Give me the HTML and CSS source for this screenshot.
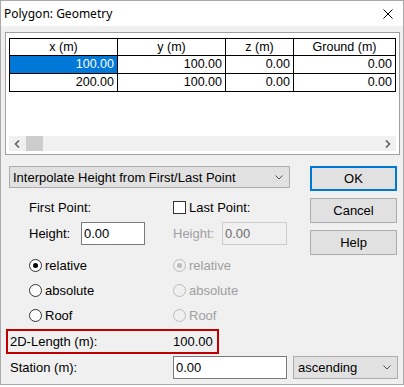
FILE: index.html
```html
<!DOCTYPE html>
<html lang="en">
<head>
    <meta charset="UTF-8">
    <title>Polygon: Geometry</title>
    <link rel="stylesheet" href="styles.css">
</head>
<body>
    <div class="window">
        <div class="titlebar">
            <span class="title">Polygon: Geometry</span>
            <svg class="close" width="10" height="10" viewBox="0 0 10 10">
                <path d="M0.5 0.5 L9.5 9.5 M9.5 0.5 L0.5 9.5" stroke="#000" stroke-width="1" fill="none"/>
            </svg>
        </div>
        <div class="content">
            <div class="grid-frame">
                <div class="grid-body">
                    <table class="points">
                        <colgroup>
                            <col style="width:108px">
                            <col style="width:108px">
                            <col style="width:68px">
                            <col style="width:102px">
                        </colgroup>
                        <thead>
                            <tr><th>x (m)</th><th>y (m)</th><th>z (m)</th><th>Ground (m)</th></tr>
                        </thead>
                        <tbody>
                            <tr><td class="selected">100.00</td><td>100.00</td><td>0.00</td><td>0.00</td></tr>
                            <tr><td>200.00</td><td>100.00</td><td>0.00</td><td>0.00</td></tr>
                        </tbody>
                    </table>
                </div>
                <div class="hscroll">
                    <svg class="arrow" width="6" height="8" viewBox="0 0 6 8"><path d="M5 0.5 L1.5 4 L5 7.5" stroke="#606060" stroke-width="1.6" fill="none"/></svg>
                    <span class="thumb"></span>
                    <svg class="arrow right" width="6" height="8" viewBox="0 0 6 8"><path d="M1 0.5 L4.5 4 L1 7.5" stroke="#606060" stroke-width="1.6" fill="none"/></svg>
                </div>
            </div>

            <div class="options">
                <div class="opts-left">
                    <div class="combo mode">
                        <span>Interpolate Height from First/Last Point</span>
                        <svg class="chevron" width="8" height="5" viewBox="0 0 8 5"><path d="M0.5 0.5 L4 4 L7.5 0.5" stroke="#505050" stroke-width="1" fill="none"/></svg>
                    </div>
                    <div class="points-grid">
                        <div class="cell row-a">First Point:</div>
                        <div class="cell row-a"><span class="checkbox"></span><span class="check-label">Last Point:</span></div>

                        <div class="cell row-b"><span class="field-label">Height:</span><span class="input">0.00</span></div>
                        <div class="cell row-b disabled"><span class="field-label short">Height:</span><span class="input off">0.00</span></div>

                        <div class="cell radio-row first"><span class="radio on"></span>relative</div>
                        <div class="cell radio-row first disabled"><span class="radio on off"></span>relative</div>
                        <div class="cell radio-row"><span class="radio"></span>absolute</div>
                        <div class="cell radio-row disabled"><span class="radio off"></span>absolute</div>
                        <div class="cell radio-row"><span class="radio"></span>Roof</div>
                        <div class="cell radio-row disabled"><span class="radio off"></span>Roof</div>
                    </div>
                </div>
                <div class="buttons">
                    <button class="btn default">OK</button>
                    <button class="btn">Cancel</button>
                    <button class="btn">Help</button>
                </div>
            </div>

            <div class="length-box">
                <span class="length-label">2D-Length (m):</span>
                <span>100.00</span>
            </div>

            <div class="station-row">
                <span class="station-label">Station (m):</span>
                <span class="input station">0.00</span>
                <div class="combo order">
                    <span>ascending</span>
                    <svg class="chevron" width="8" height="5" viewBox="0 0 8 5"><path d="M0.5 0.5 L4 4 L7.5 0.5" stroke="#505050" stroke-width="1" fill="none"/></svg>
                </div>
            </div>
        </div>
    </div>
</body>
</html>
```

FILE: styles.css
```css
body {
    margin: 0;
    background-color: #ffffff;
    font-family: 'Liberation Sans', Arial, sans-serif;
    font-size: 13px;
    color: #000;
}
.window {
    width: 404px;
    height: 385px;
    box-sizing: border-box;
    border: 1px solid #a9a9a9;
    background-color: #f0f0f0;
}
.titlebar {
    height: 25px;
    background-color: #ffffff;
    display: flex;
    align-items: center;
    justify-content: space-between;
    padding: 0 10px 0 3px;
}
.title {
    font-family: 'Noto Sans', sans-serif;
    font-size: 12px;
}
.close {
    display: block;
}
.grid-frame {
    margin: 6px 0 0 4px;
    width: 395px;
    height: 123px;
    box-sizing: border-box;
    border: 1px solid #a0a0a0;
    background-color: #ffffff;
    padding: 5px 3px 3px 3px;
}
.grid-body {
    height: 98px;
}
.points {
    border-collapse: collapse;
    table-layout: fixed;
    width: 387px;
    font-size: 12.5px;
}
.points th,
.points td {
    border: 1px solid #000;
    padding: 0 3px;
    height: 16px;
    line-height: 16px;
    font-weight: normal;
    white-space: nowrap;
}
.points th {
    text-align: center;
}
.points td {
    text-align: right;
    height: 17px;
    line-height: 17px;
}
.points td.selected {
    background-color: #0078d7;
    color: #ffffff;
}
.hscroll {
    height: 15px;
    background-color: #f0f0f0;
    display: flex;
    align-items: center;
}
.arrow {
    margin-left: 5px;
}
.thumb {
    width: 17px;
    height: 15px;
    margin-left: 6px;
    background-color: #cdcdcd;
}
.arrow.right {
    margin-left: auto;
    margin-right: 5px;
}
.options {
    display: flex;
    margin: 11px 0 0 8px;
}
.opts-left {
    width: 281px;
}
.combo {
    box-sizing: border-box;
    background-color: #e1e1e1;
    border: 1px solid #adadad;
    display: flex;
    align-items: center;
    justify-content: space-between;
    padding: 0 6px 0 3px;
}
.combo.mode {
    height: 22px;
}
.points-grid {
    display: grid;
    grid-template-columns: 144px 1fr;
    padding-left: 20px;
    margin-top: 12px;
}
.cell {
    display: flex;
    align-items: center;
}
.row-a {
    height: 15px;
}
.row-b {
    height: 23px;
    margin-top: 7px;
}
.radio-row {
    height: 25px;
}
.radio-row.first {
    margin-top: 8px;
}
.disabled {
    color: #a0a0a0;
}
.checkbox {
    width: 13px;
    height: 13px;
    box-sizing: border-box;
    border: 1px solid #333;
    background-color: #fff;
    margin-right: 3px;
}
.field-label {
    width: 52px;
}
.field-label.short {
    width: 49px;
}
.input {
    box-sizing: border-box;
    height: 23px;
    width: 64px;
    border: 1px solid #7a7a7a;
    background-color: #fff;
    color: #000;
    padding-left: 2px;
    display: flex;
    align-items: center;
}
.input.off {
    width: 65px;
    border-color: #cccccc;
    background-color: #f0f0f0;
    color: #6d6d6d;
}
.radio {
    width: 13px;
    height: 13px;
    box-sizing: border-box;
    border-radius: 50%;
    border: 1px solid #333;
    background-color: #fff;
    margin-right: 3px;
    display: flex;
    align-items: center;
    justify-content: center;
}
.radio.on::after {
    content: "";
    width: 5px;
    height: 5px;
    border-radius: 50%;
    background-color: #000;
}
.radio.off {
    border-color: #bcbcbc;
    background-color: #f0f0f0;
}
.radio.off.on::after {
    background-color: #bcbcbc;
}
.buttons {
    margin-left: 20px;
    width: 87px;
    display: flex;
    flex-direction: column;
    gap: 7px;
}
.btn {
    height: 25px;
    box-sizing: border-box;
    background-color: #e1e1e1;
    border: 1px solid #adadad;
    font-family: 'Liberation Sans', Arial, sans-serif;
    font-size: 13px;
    color: #000;
    padding: 0;
}
.btn.default {
    border: 2px solid #0078d7;
}
.length-box {
    margin: 1px 0 0 5px;
    width: 213px;
    height: 25px;
    box-sizing: border-box;
    border: 2px solid #c00000;
    display: flex;
    align-items: center;
    padding-left: 2px;
}
.length-label {
    width: 163px;
}
.station-row {
    margin: 2px 0 0 9px;
    display: flex;
    align-items: center;
}
.station-label {
    width: 163px;
}
.input.station {
    width: 114px;
}
.combo.order {
    height: 23px;
    width: 105px;
    margin-left: 6px;
    padding-left: 4px;
}
```
